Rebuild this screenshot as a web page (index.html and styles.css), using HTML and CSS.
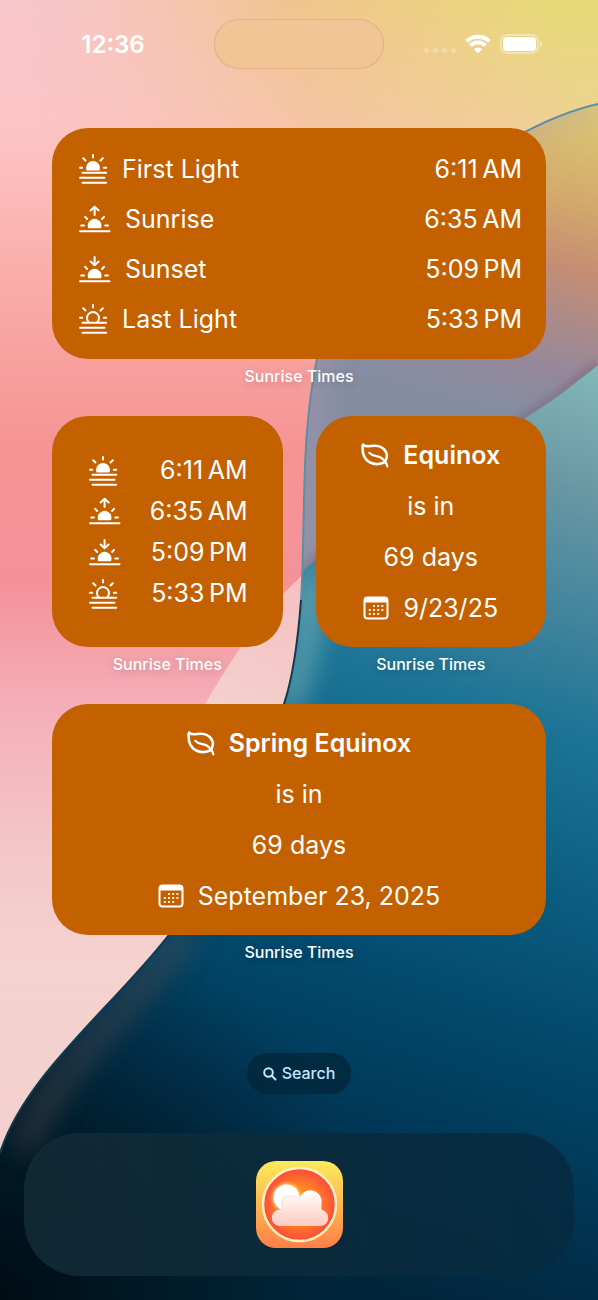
FILE: index.html
```
<!DOCTYPE html>
<html lang="en">
<head>
    <meta charset="UTF-8">
    <meta name="viewport" content="width=device-width, initial-scale=1.0">
    <title>Sunrise Times</title>
    <link rel="stylesheet" href="styles.css">
</head>
<body>

    <!-- Wallpaper -->
    <svg class="wallpaper" viewBox="0 0 598 1300" preserveAspectRatio="none" aria-hidden="true">
        <defs>
            <linearGradient id="pink" x1="0" y1="0" x2="0" y2="1">
                <stop offset="0" stop-color="#f8c6cb"/>
                <stop offset="0.1" stop-color="#fdc4c4"/>
                <stop offset="0.23" stop-color="#f9aaa6"/>
                <stop offset="0.35" stop-color="#f59394"/>
                <stop offset="0.45" stop-color="#f4929a"/>
                <stop offset="0.55" stop-color="#f5b0b9"/>
                <stop offset="0.66" stop-color="#f3c8c9"/>
                <stop offset="0.74" stop-color="#f4d2d0"/>
                <stop offset="1" stop-color="#f3cfcc"/>
            </linearGradient>
            <linearGradient id="yellow" gradientUnits="userSpaceOnUse" x1="40" y1="120" x2="560" y2="10">
                <stop offset="0" stop-color="#f6c5b0" stop-opacity="0"/>
                <stop offset="0.5" stop-color="#f1c48e"/>
                <stop offset="1" stop-color="#e6da76"/>
            </linearGradient>
            <linearGradient id="fade" x1="0" y1="0" x2="0" y2="1">
                <stop offset="0" stop-color="#fff"/>
                <stop offset="0.35" stop-color="#fff" stop-opacity="0.7"/>
                <stop offset="1" stop-color="#fff" stop-opacity="0"/>
            </linearGradient>
            <mask id="fadeMask">
                <rect width="598" height="300" fill="url(#fade)"/>
            </mask>
            <linearGradient id="dusk" gradientUnits="userSpaceOnUse" x1="590" y1="110" x2="510" y2="410">
                <stop offset="0" stop-color="#dcc872"/>
                <stop offset="0.3" stop-color="#d3a86c"/>
                <stop offset="0.5" stop-color="#c68e73"/>
                <stop offset="0.68" stop-color="#ab8a89"/>
                <stop offset="0.84" stop-color="#95889a"/>
                <stop offset="1" stop-color="#868da3"/>
            </linearGradient>
            <linearGradient id="petal" gradientUnits="userSpaceOnUse" x1="300" y1="580" x2="220" y2="720">
                <stop offset="0" stop-color="#f6c0c2"/>
                <stop offset="1" stop-color="#f3d2ce"/>
            </linearGradient>
            <linearGradient id="sea" gradientUnits="userSpaceOnUse" x1="590" y1="360" x2="300" y2="1260">
                <stop offset="0" stop-color="#84b9bb"/>
                <stop offset="0.13" stop-color="#6a98a4"/>
                <stop offset="0.26" stop-color="#43859d"/>
                <stop offset="0.38" stop-color="#1d7496"/>
                <stop offset="0.55" stop-color="#0b5d80"/>
                <stop offset="0.7" stop-color="#02486b"/>
                <stop offset="0.85" stop-color="#013655"/>
                <stop offset="1" stop-color="#01263c"/>
            </linearGradient>
            <radialGradient id="night" gradientUnits="userSpaceOnUse" cx="0" cy="1300" r="390">
                <stop offset="0" stop-color="#000c13"/>
                <stop offset="0.5" stop-color="#001824" stop-opacity="0.7"/>
                <stop offset="1" stop-color="#012437" stop-opacity="0"/>
            </radialGradient>
            <filter id="soft" filterUnits="userSpaceOnUse" x="-60" y="0" width="720" height="1360">
                <feGaussianBlur stdDeviation="14"/>
            </filter>
            <filter id="edge" filterUnits="userSpaceOnUse" x="0" y="300" width="660" height="400">
                <feGaussianBlur stdDeviation="5"/>
            </filter>
            <clipPath id="rightSide">
                <path d="M598 104C500 126 345 240 317 359C300 440 306 520 301 600C298 640 292 680 284 704C250 810 210 882 168 936C110 1010 25 1075 0 1153V1300H598Z"/>
            </clipPath>
        </defs>
        <rect width="598" height="1300" fill="url(#pink)"/>
        <rect width="598" height="300" fill="url(#yellow)" mask="url(#fadeMask)"/>
        <path d="M320 560C270 600 238 648 205 704L160 800L320 760Z" fill="url(#petal)"/>
        <g clip-path="url(#rightSide)">
            <rect width="598" height="620" fill="url(#dusk)"/>
            <path d="M598 104C500 126 345 240 317 359C300 440 306 520 301 600" fill="none" stroke="#b7a0b4" stroke-width="20" opacity="0.5" filter="url(#soft)"/>
            <path d="M598 364C550 404 530 416 500 432C420 480 350 530 280 590" fill="none" stroke="#776578" stroke-width="8" opacity="0.7" filter="url(#edge)"/>
            <path d="M598 365C550 404 530 416 500 432C420 480 350 530 280 590L200 750L0 950V1300H598Z" fill="url(#sea)"/>
            <path d="M312 575C308 640 298 680 284 710" fill="none" stroke="#8fc4c2" stroke-width="24" opacity="0.6" filter="url(#soft)"/>
            <rect y="900" width="400" height="400" fill="url(#night)"/>
            <path d="M190 930C132 1004 52 1075 22 1150" fill="none" stroke="#54494b" stroke-width="20" opacity="0.6" filter="url(#soft)"/>
        </g>
        <path d="M598 104C500 126 345 240 317 359C300 440 306 520 301 600" fill="none" stroke="#5b8fa3" stroke-width="2"/>
        <path d="M301 600C298 640 292 680 284 704C250 810 210 882 168 936C110 1010 25 1075 0 1153" fill="none" stroke="#12394c" stroke-width="2"/>
    </svg>

    <!-- Shared icons -->
    <svg class="sprite" aria-hidden="true">
        <symbol id="icon-first-light" viewBox="0 0 30 31">
            <path class="line" d="M15 2V4.500M5.200 5.200L7.500 7.500M24.800 5.200L22.500 7.500M2 14.700H4.200M25.800 14.700H28.200M4.500 19.700H28.200M2 24.700H26.500M4.500 29.700H28.200"/>
            <path class="solid" d="M8.600 17.500A6.900 6.900 0 1 1 21.400 17.500Z"/>
        </symbol>
        <symbol id="icon-last-light" viewBox="0 0 30 31">
            <path class="line" d="M15 2V4.500M5.200 5.200L7.500 7.500M24.800 5.200L22.500 7.500M2 14.700H4.200M25.800 14.700H28.200M4.500 19.700H28.200M2 24.700H26.500M4.500 29.700H28.200M11 19.500A6 6 0 1 1 19 19.500"/>
        </symbol>
        <symbol id="icon-sunrise" viewBox="0 0 33 28">
            <path class="line" d="M16.600 2V10M12.600 5.500L16.600 1.700L20.600 5.500M7.200 11.800L9.200 14M26 11.800L24 14M3.200 20.600H6M27.200 20.600H30M2 26.200H31.500"/>
            <path class="solid" d="M10.200 23.300A6.900 6.900 0 1 1 23 23.300Z"/>
        </symbol>
        <symbol id="icon-sunset" viewBox="0 0 33 28">
            <path class="line" d="M16.600 2V10M12.600 6.500L16.600 10.300L20.600 6.500M7.200 11.800L9.200 14M26 11.800L24 14M3.200 20.600H6M27.200 20.600H30M2 26.200H31.500"/>
            <path class="solid" d="M10.200 23.300A6.900 6.900 0 1 1 23 23.300Z"/>
        </symbol>
        <symbol id="icon-leaf" viewBox="0 0 28 25">
            <path class="line thick" d="M22.500 19.700C13 23.500 1.500 19 1.600 5.500C1.600 3.500 1.500 1.500 2.300 1.700C5.500 4.800 9.500 2.500 14.500 2.800C22 3.200 26.500 8.500 25.800 14C25.500 16.500 24.300 18.300 22.800 19.600"/>
            <path class="line vein" d="M8.300 9.800C12.500 14.500 16.500 12 20.500 15C23.500 17.300 25.500 19.500 26.300 23.300"/>
        </symbol>
        <symbol id="icon-calendar" viewBox="0 0 26 24">
            <rect class="line" x="1.500" y="1.500" width="23" height="21" rx="3"/>
            <path class="solid" d="M1 6.500V4A3 3 0 0 1 4 1H22A3 3 0 0 1 25 4V6.500Z"/>
            <path class="dots" d="M11 10H11M15.200 10H15.200M19.400 10H19.400M6.800 14H6.800M11 14H11M15.200 14H15.200M19.400 14H19.400M6.800 18H6.800M11 18H11M15.200 18H15.200"/>
        </symbol>
    </svg>

    <!-- Status Bar -->
    <header class="status-bar">
        <time class="clock">12:36</time>
        <div class="island"></div>
        <div class="indicators">
            <span class="signal"><i></i><i></i><i></i><i></i></span>
            <svg class="wifi" viewBox="0 0 26 20" aria-hidden="true">
                <path d="M13 19.500L8.800 15.300A6 6 0 0 1 17.200 15.300Z" fill="#fff"/>
                <path d="M5.600 11.600A10.500 10.500 0 0 1 20.400 11.600M1.600 7.200A16.500 16.500 0 0 1 24.400 7.200" fill="none" stroke="#fff" stroke-width="4"/>
            </svg>
            <svg class="battery" viewBox="0 0 42 20" aria-hidden="true">
                <rect x="1" y="1" width="37" height="18" rx="6" fill="none" stroke="#fff" stroke-width="2" opacity="0.4"/>
                <rect x="3" y="3" width="33" height="14" rx="4" fill="#fff"/>
                <path d="M40 7Q42 8 42 10Q42 12 40 13Z" fill="#fff" opacity="0.5"/>
            </svg>
        </div>
    </header>

    <!-- Widgets -->
    <main class="widgets">
        <figure class="wide">
            <ul class="widget times">
                <li><svg class="icon"><use href="#icon-first-light"/></svg><span>First Light</span><time>6:11&#8239;AM</time></li>
                <li><svg class="icon icon-wide"><use href="#icon-sunrise"/></svg><span>Sunrise</span><time>6:35&#8239;AM</time></li>
                <li><svg class="icon icon-wide"><use href="#icon-sunset"/></svg><span>Sunset</span><time>5:09&#8239;PM</time></li>
                <li><svg class="icon"><use href="#icon-last-light"/></svg><span>Last Light</span><time>5:33&#8239;PM</time></li>
            </ul>
            <figcaption>Sunrise Times</figcaption>
        </figure>

        <figure>
            <ul class="widget times compact">
                <li><svg class="icon"><use href="#icon-first-light"/></svg><time>6:11&#8239;AM</time></li>
                <li><svg class="icon icon-wide"><use href="#icon-sunrise"/></svg><time>6:35&#8239;AM</time></li>
                <li><svg class="icon icon-wide"><use href="#icon-sunset"/></svg><time>5:09&#8239;PM</time></li>
                <li><svg class="icon"><use href="#icon-last-light"/></svg><time>5:33&#8239;PM</time></li>
            </ul>
            <figcaption>Sunrise Times</figcaption>
        </figure>

        <figure>
            <div class="widget event">
                <h2><svg class="icon-leaf"><use href="#icon-leaf"/></svg>Equinox</h2>
                <p>is in</p>
                <p>69 days</p>
                <p><svg class="icon-calendar"><use href="#icon-calendar"/></svg>9/23/25</p>
            </div>
            <figcaption>Sunrise Times</figcaption>
        </figure>

        <figure class="wide">
            <div class="widget event">
                <h2><svg class="icon-leaf"><use href="#icon-leaf"/></svg>Spring Equinox</h2>
                <p>is in</p>
                <p>69 days</p>
                <p><svg class="icon-calendar"><use href="#icon-calendar"/></svg>September 23, 2025</p>
            </div>
            <figcaption>Sunrise Times</figcaption>
        </figure>
    </main>

    <!-- Search -->
    <button class="search" type="button">
        <svg class="search-icon" viewBox="0 0 14 14" aria-hidden="true">
            <circle cx="5.500" cy="5.500" r="4.300"/>
            <path d="M8.800 8.800L12.500 12.500"/>
        </svg>
        Search
    </button>

    <!-- Dock -->
    <nav class="dock">
        <a class="app" href="#" aria-label="Sunrise Times">
            <svg viewBox="0 0 87 87" aria-hidden="true">
                <defs>
                    <linearGradient id="appBack" x1="0" y1="0" x2="0" y2="1">
                        <stop offset="0" stop-color="#fcea5c"/>
                        <stop offset="0.5" stop-color="#fdb750"/>
                        <stop offset="1" stop-color="#ff7f47"/>
                    </linearGradient>
                    <radialGradient id="appSky">
                        <stop offset="0" stop-color="#ffa51c"/>
                        <stop offset="0.5" stop-color="#ff8424"/>
                        <stop offset="1" stop-color="#fb4b3a"/>
                    </radialGradient>
                    <radialGradient id="appGlow">
                        <stop offset="0.6" stop-color="#fff6c8"/>
                        <stop offset="1" stop-color="#ffc040" stop-opacity="0"/>
                    </radialGradient>
                    <linearGradient id="appCloud" gradientUnits="userSpaceOnUse" x1="0" y1="32" x2="0" y2="65">
                        <stop offset="0" stop-color="#fffdfb"/>
                        <stop offset="0.5" stop-color="#fde3dc"/>
                        <stop offset="1" stop-color="#ffcbc0"/>
                    </linearGradient>
                </defs>
                <rect width="87" height="87" rx="20" fill="url(#appBack)"/>
                <circle cx="43.500" cy="43.500" r="36.500" fill="url(#appSky)" stroke="#fff0c0" stroke-width="2.500"/>
                <circle cx="30.500" cy="36.500" r="17" fill="url(#appGlow)"/>
                <circle cx="30.500" cy="36.500" r="13" fill="#fff"/>
                <path d="M22.500 65A8.300 8.300 0 0 1 22.500 48.700H26A9.500 9.500 0 0 1 43 38.500A11.300 11.300 0 0 1 65.500 43V48.700A8.300 8.300 0 0 1 65.500 65Z" fill="url(#appCloud)"/>
                <path d="M25.500 45A9.500 9.500 0 0 1 42 38" fill="none" stroke="#e4cdc4" stroke-width="0.500"/>
            </svg>
        </a>
    </nav>

</body>
</html>
```

FILE: styles.css
```
/* Basic Reset */
* {
    margin: 0;
    padding: 0;
    box-sizing: border-box;
}

/* Body Styles */
body {
    position: relative;
    display: flex;
    flex-direction: column;
    min-height: 100vh;
    font-family: Inter, 'Liberation Sans', sans-serif;
    color: white;
}

/* Wallpaper sits behind everything */
.wallpaper {
    position: absolute;
    top: 0;
    left: 0;
    width: 100%;
    height: 100%;
    z-index: -1;
}

/* Icons */
.sprite {
    display: none;
}

.line {
    fill: none;
    stroke: white;
    stroke-width: 2;
    stroke-linecap: round;
    stroke-linejoin: round;
}

.thick {
    stroke-width: 2.6;
}

.vein {
    stroke-width: 2.2;
}

.solid {
    fill: white;
}

.dots {
    fill: none;
    stroke: #fff0d8;
    stroke-width: 2;
    stroke-linecap: square;
}

.icon {
    width: 30px;
    height: 31px;
}

.icon-wide {
    width: 33px;
    height: 28px;
}

.icon-leaf {
    width: 28px;
    height: 25px;
}

.icon-calendar {
    width: 26px;
    height: 24px;
}

/* Status Bar */
.status-bar {
    display: grid;
    grid-template-columns: 1fr 170px 1fr;
    align-items: center;
    justify-items: center;
    padding: 19px 12px 0;
    margin-bottom: 59px;
}

.clock {
    font-size: 24px;
    font-weight: 600;
}

.island {
    width: 100%;
    height: 50px;
    border: 1px solid rgba(210, 130, 90, 0.35);
    border-radius: 25px;
    background-color: #f1c596;
}

.indicators {
    display: flex;
    align-items: center;
    gap: 9px;
    padding-right: 4px;
}

.signal {
    display: flex;
    gap: 4px;
    padding-top: 12px;
}

.signal i {
    width: 5px;
    height: 5px;
    border-radius: 50%;
    background-color: rgba(255, 255, 255, 0.25);
}

.wifi {
    width: 26px;
    height: 20px;
}

.battery {
    width: 42px;
    height: 20px;
}

/* Widgets */
.widgets {
    display: grid;
    grid-template-columns: 1fr 1fr;
    gap: 24px 33px;
    padding: 0 52px;
}

.wide {
    grid-column: span 2;
}

.widget {
    display: flex;
    flex-direction: column;
    justify-content: center;
    min-height: 231px;
    border-radius: 36px;
    background-color: #c36000;
    font-size: 25px;
    line-height: 50px;
}

figcaption {
    padding: 3px 0 2px;
    font-size: 16px;
    font-weight: 500;
    line-height: 28px;
    text-align: center;
    text-shadow: 0 2px 10px rgba(0, 0, 0, 0.2);
}

.times {
    padding: 0 24px 0 26px;
    list-style: none;
}

.times li {
    display: flex;
    align-items: center;
    gap: 14px;
}

.times time {
    margin-left: auto;
}

.compact {
    padding: 0 35px 0 36px;
    line-height: 41px;
}

.event h2,
.event p {
    display: flex;
    align-items: center;
    justify-content: center;
    gap: 14px;
    font-size: 25px;
    line-height: 51px;
}

.event h2 {
    font-weight: 600;
}

/* Search */
.search {
    display: flex;
    align-items: center;
    align-self: center;
    gap: 5px;
    margin-top: 85px;
    padding: 0 16px;
    border: none;
    border-radius: 20px;
    background-color: rgba(2, 38, 56, 0.75);
    color: #c5e6fa;
    font-family: inherit;
    font-size: 16px;
    font-weight: 500;
    line-height: 41px;
    cursor: pointer;
}

.search-icon {
    width: 14px;
    height: 14px;
    fill: none;
    stroke: #c5e6fa;
    stroke-width: 2;
    stroke-linecap: round;
}

/* Dock */
.dock {
    display: flex;
    justify-content: center;
    margin: 39px 24px 24px;
    padding: 28px;
    border-radius: 56px;
    background-image: linear-gradient(to right, rgba(18, 42, 54, 0.9), rgba(6, 42, 64, 0.85));
}

.app {
    width: 87px;
    height: 87px;
}

.app svg {
    display: block;
}
```
